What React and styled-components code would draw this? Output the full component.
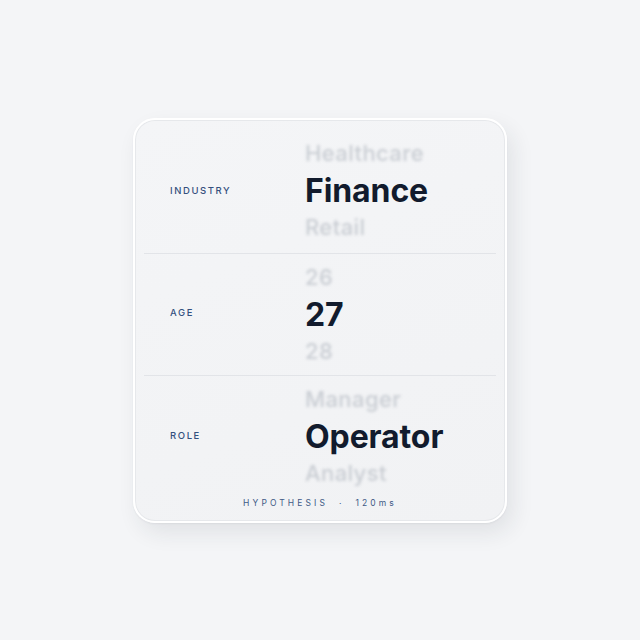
import React from 'react'
import styled, { createGlobalStyle } from 'styled-components'

const GlobalStyle = createGlobalStyle`
    html, body {
        margin: 0;
        padding: 0;
        background: #f4f5f7;
        font-family: Inter, "Liberation Sans", sans-serif;
    }
`

const Page = styled.div`
    width: 100vw;
    height: 100vh;
    display: flex;
    align-items: center;
    justify-content: center;
`

const Card = styled.div`
    box-sizing: border-box;
    width: 374px;
    height: 405px;
    padding: 12px 9px 0;
    border-radius: 22px;
    background: linear-gradient(160deg, #f4f5f7 0%, #f1f2f4 100%);
    border: 2px solid #ffffff;
    box-shadow:
        inset 0 0 0 1px #e6e8eb,
        0 1px 2px rgba(30, 40, 60, 0.06),
        6px 10px 22px rgba(30, 40, 60, 0.09);
    display: flex;
    flex-direction: column;
`

const Row = styled.div`
    box-sizing: border-box;
    height: 122px;
    display: grid;
    grid-template-columns: 135px 1fr;
    align-items: center;
    padding: 0 0 0 26px;
    border-bottom: ${p => (p.last ? 'none' : '1px solid #e2e4e8')};
`

const Label = styled.div`
    font-size: 9.5px;
    font-weight: 500;
    letter-spacing: 1.6px;
    color: #34507e;
    margin-top: -3px;
`

const Wheel = styled.div`
    display: flex;
    flex-direction: column;
    margin-top: ${p => (p.first ? '-3px' : '0')};
`

const Ghost = styled.div`
    height: 37px;
    line-height: 37px;
    font-size: 22px;
    font-weight: 500;
    letter-spacing: 0.4px;
    color: #c9cdd3;
    filter: blur(1.4px);
    white-space: nowrap;
`

const Current = styled.div`
    height: 37px;
    line-height: 37px;
    font-size: 32px;
    font-weight: 700;
    color: #121b2d;
    letter-spacing: -0.1px;
    white-space: nowrap;
`

const Footer = styled.div`
    text-align: center;
    font-size: 8.5px;
    letter-spacing: 3.1px;
    color: #3f5a86;
`

const rows = [
    { label: 'INDUSTRY', prev: 'Healthcare', value: 'Finance', next: 'Retail' },
    { label: 'AGE', prev: '26', value: '27', next: '28' },
    { label: 'ROLE', prev: 'Manager', value: 'Operator', next: 'Analyst' },
]

export default function App() {
    return (
        <Page>
            <GlobalStyle />
            <Card>
                {rows.map((r, i) => (
                    <Row key={r.label} last={i === rows.length - 1}>
                        <Label>{r.label}</Label>
                        <Wheel first={i === 0}>
                            <Ghost>{r.prev}</Ghost>
                            <Current>{r.value}</Current>
                            <Ghost>{r.next}</Ghost>
                        </Wheel>
                    </Row>
                ))}
                <Footer>HYPOTHESIS &nbsp;·&nbsp; 120ms</Footer>
            </Card>
        </Page>
    )
}
